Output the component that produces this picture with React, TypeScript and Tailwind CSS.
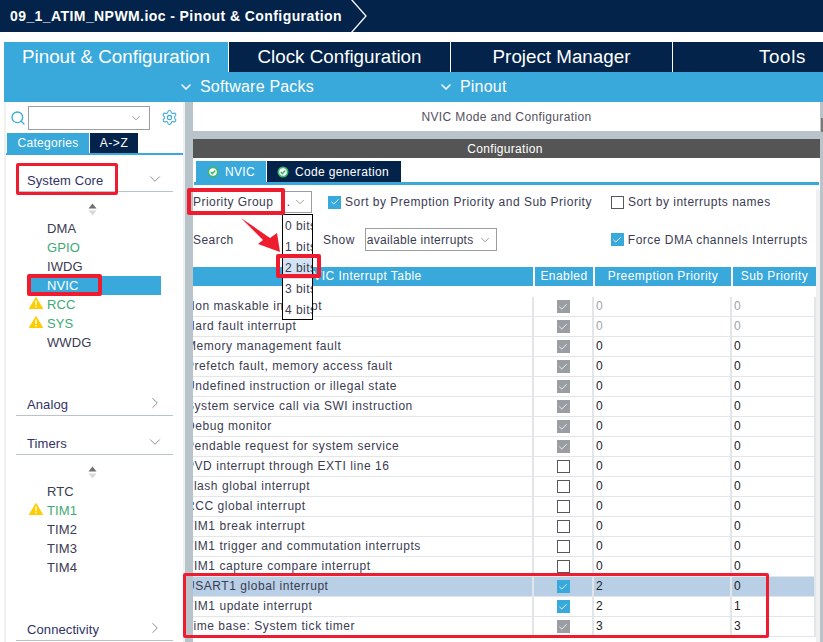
import React from "react";
import { ChevronDown, ChevronRight, Search, Settings, Check } from "lucide-react";

const font = { fontFamily: '"Liberation Sans", Arial, sans-serif' };

function Warn() {
  return (
    <svg width="14" height="12" viewBox="0 0 14 12" className="absolute left-[-18px] top-[2px]">
      <path d="M7 0.5 L13.6 11.5 L0.4 11.5 Z" fill="#ffcc00" stroke="#ffcc00" strokeLinejoin="round" />
      <rect x="6.3" y="3.5" width="1.4" height="4.6" fill="#fff" />
      <rect x="6.3" y="9" width="1.4" height="1.4" fill="#fff" />
    </svg>
  );
}

function Sort() {
  return (
    <div className="h-[19px] flex items-center justify-center pr-[4px]">
      <svg width="9" height="13" viewBox="0 0 9 13">
        <path d="M4.5 0.5 L8.5 5.5 L0.5 5.5 Z" fill="#6d6f72" />
        <path d="M4.5 12.5 L8.5 7.5 L0.5 7.5 Z" fill="#d6d8da" />
      </svg>
    </div>
  );
}

function Item({ name, green, warn, active }: { name: string; green?: boolean; warn?: boolean; active?: boolean }) {
  return (
    <div className={"h-[19px] flex items-center pl-[16px] ml-[25px] mr-[22px] text-[13px] tracking-[0.1px] " + (active ? "bg-[#39a9dc] text-white" : green ? "text-[#3dab73]" : "text-[#3b3b52]")}>
      <span className="relative">
        {warn && <Warn />}
        {name}
      </span>
    </div>
  );
}

function Head({ name, open, className }: { name: string; open?: boolean; className: string }) {
  return (
    <div className={"mx-[10px] border-b border-[#b9c4ca] flex items-center justify-between pl-[11px] pr-[9px] text-[13px] tracking-[0.1px] text-[#2f3266] " + className}>
      <span>{name}</span>
      {open ? <ChevronDown size={18} strokeWidth={1} className="text-[#666] mb-[4px]" /> : <ChevronRight size={18} strokeWidth={1} className="text-[#666] mb-[4px]" />}
    </div>
  );
}

function Box({ state }: { state: "on" | "off" | "lock" }) {
  if (state === "off") return <div className="w-[13px] h-[13px] border border-[#55585c] bg-white" />;
  return (
    <div className={"w-[13px] h-[13px] flex items-center justify-center " + (state === "on" ? "bg-[#39a9dc]" : "bg-[#9a9ea3]")}>
      <Check size={10} strokeWidth={2} className="text-white" />
    </div>
  );
}

const rows: [string, "on" | "off" | "lock", string, string, boolean?][] = [
  ["Non maskable interrupt", "lock", "0", "0", true],
  ["Hard fault interrupt", "lock", "0", "0", true],
  ["Memory management fault", "lock", "0", "0"],
  ["Prefetch fault, memory access fault", "lock", "0", "0"],
  ["Undefined instruction or illegal state", "lock", "0", "0"],
  ["System service call via SWI instruction", "lock", "0", "0"],
  ["Debug monitor", "lock", "0", "0"],
  ["Pendable request for system service", "lock", "0", "0"],
  ["PVD interrupt through EXTI line 16", "off", "0", "0"],
  ["Flash global interrupt", "off", "0", "0"],
  ["RCC global interrupt", "off", "0", "0"],
  ["TIM1 break interrupt", "off", "0", "0"],
  ["TIM1 trigger and commutation interrupts", "off", "0", "0"],
  ["TIM1 capture compare interrupt", "off", "0", "0"],
  ["USART1 global interrupt", "on", "2", "0"],
  ["TIM1 update interrupt", "on", "2", "1"],
  ["Time base: System tick timer", "lock", "3", "3"],
];

function RedBox({ className }: { className: string }) {
  return <div className={"absolute border-[#ee1c2e] rounded-[2px] pointer-events-none " + className} />;
}

function GreenCheck() {
  return (
    <svg width="12" height="12" viewBox="0 0 12 12">
      <circle cx="6" cy="6" r="5.5" fill="#3fb56d" />
      <circle cx="6" cy="6" r="3.8" fill="#fff" />
      <path d="M3.8 6 L5.4 7.6 L8.3 4.6" stroke="#3fb56d" strokeWidth="1.5" fill="none" />
    </svg>
  );
}

export default function App() {
  return (
    <div style={font} className="relative w-[823px] h-[642px] overflow-hidden bg-white">
      {/* breadcrumb */}
      <div className="h-[32px] bg-[#03234b] flex items-center pl-[10px] relative">
        <span className="text-white font-bold text-[14px] tracking-[0.42px]">09_1_ATIM_NPWM.ioc - Pinout &amp; Configuration</span>
        <svg width="18" height="32" viewBox="0 0 18 32" className="ml-[8px]">
          <path d="M1 -1 L16 16 L1 33" stroke="#fff" strokeWidth="1.3" fill="none" />
        </svg>
      </div>

      {/* main tabs */}
      <div className="mt-[10px] ml-[4px] h-[30px] flex text-[18.8px] leading-[30px] bg-[#03234b] text-white text-center">
        <div className="w-[224px] bg-[#39a9dc]">Pinout &amp; Configuration</div>
        <div className="w-[222px] border-l border-white">Clock Configuration</div>
        <div className="w-[222px] border-l border-white">Project Manager</div>
        <div className="flex-1 border-l border-white pl-[69px] tracking-[0.6px]">Tools</div>
      </div>
      <div className="ml-[4px] h-[30px] bg-[#39a9dc] flex items-center text-white text-[16px] tracking-[0.2px]">
        <ChevronDown size={16} strokeWidth={2.4} className="ml-[174px] mr-[6px]" />
        <span>Software Packs</span>
        <ChevronDown size={16} strokeWidth={2.4} className="ml-[124px] mr-[6px]" />
        <span>Pinout</span>
      </div>

      <div className="flex h-[540px]">
        {/* left panel */}
        <div className="w-[181px] ml-[4px] shrink-0 border-l-2 border-r-2 border-[#eef0f1] overflow-hidden">
          <div className="h-[31px] flex items-center pl-[4px]">
            <Search size={16} strokeWidth={2} className="text-[#39a9dc] mr-[2px]" />
            <div className="w-[122px] h-[24px] border border-[#9a9ea3] flex items-center justify-end pr-[6px]">
              <ChevronDown size={14} strokeWidth={1} className="text-[#555]" />
            </div>
            <Settings size={17} strokeWidth={1.5} className="text-[#39a9dc] ml-[11px]" />
          </div>
          <div className="flex h-[20px] text-[12px] leading-[20px] text-center">
            <div className="w-[82px] ml-[1px] bg-[#39a9dc] text-white tracking-[0.3px]">Categories</div>
            <div className="w-[48px] ml-[1px] bg-[#03234b] text-white tracking-[0.6px]">A-&gt;Z</div>
          </div>
          <div className="h-[2px] bg-[#39a9dc] mb-[15px]" />
          <Head name="System Core" open className="h-[22px]" />
          <div className="h-[8px]" />
          <Sort />
          <Item name="DMA" />
          <Item name="GPIO" green />
          <Item name="IWDG" />
          <Item name="NVIC" active />
          <Item name="RCC" green warn />
          <Item name="SYS" green warn />
          <Item name="WWDG" />
          <div className="h-[41px]" />
          <Head name="Analog" className="h-[23px] pt-[2px]" />
          <div className="h-[16px]" />
          <Head name="Timers" open className="h-[23px] pt-[2px]" />
          <div className="h-[8px]" />
          <Sort />
          <Item name="RTC" />
          <Item name="TIM1" green warn />
          <Item name="TIM2" />
          <Item name="TIM3" />
          <Item name="TIM4" />
          <div className="h-[41px]" />
          <Head name="Connectivity" className="h-[23px] pt-[2px]" />
        </div>

        {/* splitter */}
        <div className="w-[8px] shrink-0 bg-[#b9c4ca]" />

        {/* right panel */}
        <div className="relative flex-1 min-w-0 text-[12px] tracking-[0.5px] text-[#3b3b52] border-r-[3px] border-[#b9c4ca]">
          <div className="absolute right-[-3px] top-[16px] w-[2px] h-[14px] bg-[#777]" />
          <div className="h-[29px] flex items-center justify-center tracking-[0.37px] text-[#55505f]">NVIC Mode and Configuration</div>
          <div className="h-[8px] bg-[#b9c4ca]" />
          <div className="h-[19px] bg-[#555555] text-white flex items-center justify-center tracking-[0.3px] pr-[3px]">Configuration</div>
          <div className="h-[3px]" />
          <div className="flex h-[21px] ml-[3px] tracking-[0.35px]">
            <div className="w-[70px] bg-[#39a9dc] text-white flex items-center gap-[6px] pl-[11px]">
              <GreenCheck />
              <span>NVIC</span>
            </div>
            <div className="w-[134px] ml-[1px] bg-[#03234b] text-white flex items-center gap-[6px] pl-[10px]">
              <GreenCheck />
              <span>Code generation</span>
            </div>
          </div>
          <div className="h-[3px] bg-[#39a9dc] ml-[1px] mr-[1px]" />

          <div className="h-[457px] border-r-[4px] border-[#eef0f2]">
            {/* toolbar */}
            <div className="h-[23px] pt-[1px] mt-[5px] flex items-center overflow-hidden">
              <div className="w-[119px] h-[22px] border border-[#9a9ea3] border-l-0 flex items-center justify-between pr-[4px]">
                <span className="tracking-[0.45px]">Priority Group</span>
                <span className="flex items-center gap-[2px] tracking-[1px]">..<ChevronDown size={14} strokeWidth={1} className="text-[#555]" /></span>
              </div>
              <div className="ml-[16px] mr-[4px]"><Box state="on" /></div>
              <span>Sort by Premption Priority and Sub Priority</span>
              <div className="ml-[19px] mr-[4px]"><Box state="off" /></div>
              <span>Sort by interrupts names</span>
            </div>
            <div className="h-[23px] mt-[15px] flex items-center">
              <div className="w-[130px] overflow-hidden"><span className="tracking-[0.45px]">Search</span></div>
              <span className="tracking-[0.45px]">Show</span>
              <div className="ml-[10px] w-[132px] h-[23px] border border-[#9a9ea3] flex items-center justify-between pl-[1px] pr-[4px]">
                <span className="tracking-[0.3px]">available interrupts</span>
                <ChevronDown size={14} strokeWidth={1} className="text-[#555]" />
              </div>
              <div className="ml-[114px] mr-[4px]"><Box state="on" /></div>
              <span>Force DMA channels Interrupts</span>
            </div>

            {/* table */}
            <div className="h-[19px] mt-[16px] flex gap-[2px] text-white text-center leading-[19px] tracking-[0.45px]">
              <div className="flex-1 bg-[#39a9dc]">NVIC Interrupt Table</div>
              <div className="w-[58px] bg-[#39a9dc]">Enabled</div>
              <div className="w-[136px] bg-[#39a9dc]">Preemption Priority</div>
              <div className="w-[83px] bg-[#39a9dc]">Sub Priority</div>
            </div>
            <div className="mt-[11px]">
              {rows.map(([name, st, a, b, dim], i) => (
                <div key={name} className={"h-[20px] flex border-b border-[#e3e6e8] " + (i === 14 ? "bg-[#b8cfe5]" : "")}>
                  <div className="flex-1 min-w-0 overflow-hidden whitespace-nowrap leading-[19px] tracking-[0.55px] border-r-2 border-[#e3e6e8]">
                    <span className="block ml-[-7px]">{name}</span>
                  </div>
                  <div className="w-[60px] flex items-center justify-center border-r-2 border-[#e3e6e8]"><Box state={st} /></div>
                  <div className={"w-[138px] leading-[19px] pl-[2px] border-r-2 border-[#e3e6e8] " + (dim ? "text-[#a0a4a8]" : "text-[#222]")}>{a}</div>
                  <div className={"w-[84px] leading-[19px] pl-[2px] border-r-2 border-[#e3e6e8] " + (dim ? "text-[#a0a4a8]" : "text-[#222]")}>{b}</div>
                </div>
              ))}
            </div>
          </div>
        </div>
      </div>

      {/* dropdown overlay */}
      <div className="absolute left-[282px] top-[214px] w-[31px] h-[106px] border border-black bg-white overflow-hidden text-[12px] tracking-[0.45px] text-[#3b3b52] pt-[1px] whitespace-nowrap">
        {["0 bits", "1 bits", "2 bits", "3 bits", "4 bits"].map((t, i) => (
          <div key={t} className={"h-[21px] leading-[21px] pl-[2px] " + (i === 2 ? "bg-[#d3e3f3]" : "")}>{t}</div>
        ))}
      </div>

      {/* annotations */}
      <RedBox className="border-[3px] left-[16px] top-[163px] w-[102px] h-[32px]" />
      <RedBox className="border-[4px] left-[27px] top-[274px] w-[75px] h-[22px]" />
      <RedBox className="border-[4px] left-[187px] top-[188px] w-[98px] h-[27px]" />
      <RedBox className="border-[4px] left-[276px] top-[254px] w-[45px] h-[24px]" />
      <RedBox className="border-[3px] left-[183px] top-[573px] w-[586px] h-[65px]" />
      <svg width="48" height="46" viewBox="0 0 48 46" className="absolute left-[238px] top-[214px]">
        <path d="M3 4 L32 24 L39 19 L42 38 L20 30 L25 26 Z" fill="#ee1c2e" />
      </svg>
    </div>
  );
}
